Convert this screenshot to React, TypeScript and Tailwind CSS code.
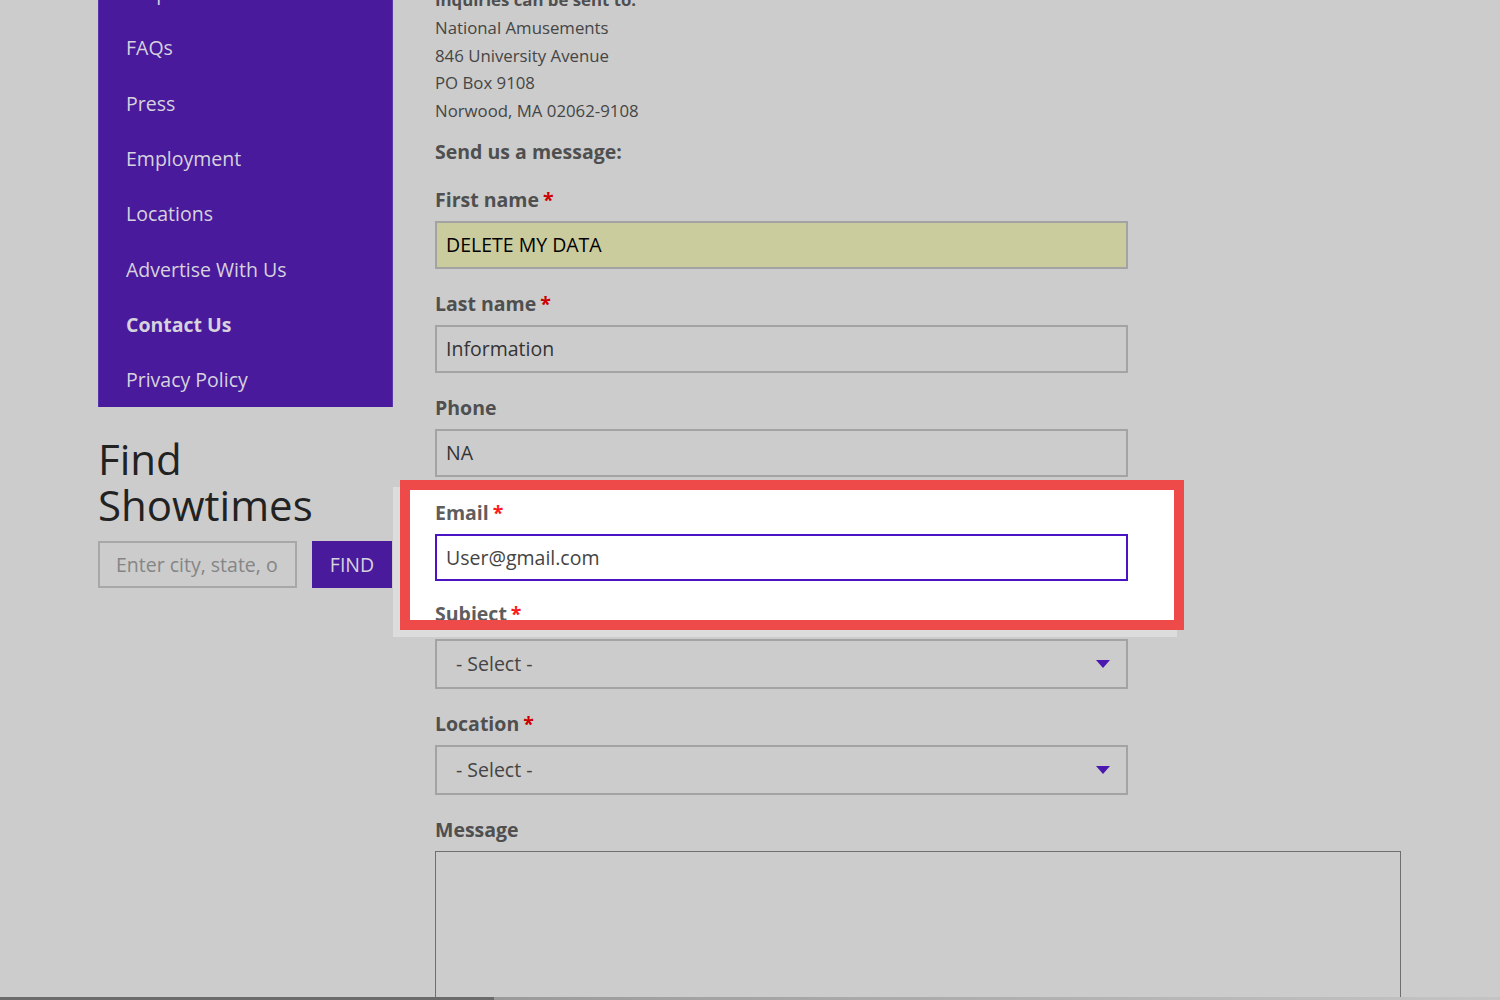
import { useState } from "react";

const navItems = [
  { label: "Help with Gift Cards", active: false },
  { label: "FAQs", active: false },
  { label: "Press", active: false },
  { label: "Employment", active: false },
  { label: "Locations", active: false },
  { label: "Advertise With Us", active: false },
  { label: "Contact Us", active: true },
  { label: "Privacy Policy", active: false },
];

const address = ["National Amusements", "846 University Avenue", "PO Box 9108", "Norwood, MA 02062-9108"];

function Label({ text, required, light }: { text: string; required?: boolean; light?: boolean }) {
  return (
    <div className={`text-[19.5px] leading-[30px] font-bold ${light ? "text-[#5e5e5e]" : "text-[#4f4f4f]"}`}>
      {text}
      {required && <span className={`ml-1 ${light ? "text-[#ff1a1a]" : "text-[#cc0000]"}`}>*</span>}
    </div>
  );
}

function TextField({ value, autofill }: { value: string; autofill?: boolean }) {
  return (
    <input
      readOnly
      value={value}
      className={`mt-[6px] w-[693px] h-[48px] border-2 border-[#a3a3a3] px-[9px] text-[19.5px] outline-none ${
        autofill ? "bg-[#cbcc9e] text-black" : "bg-transparent text-[#333]"
      }`}
    />
  );
}

function SelectField() {
  return (
    <div className="mt-[6px] w-[693px] h-[50px] border-2 border-[#a3a3a3] flex items-center justify-between pl-[19px] pr-[16px]">
      <span className="text-[19.5px] text-[#444]">- Select -</span>
      <svg width="14" height="8" viewBox="0 0 14 8">
        <path d="M0 0h14L7 8z" fill="#4a18b0" />
      </svg>
    </div>
  );
}

export default function App() {
  const [city, setCity] = useState("");

  return (
    <div className="relative h-[1000px] overflow-hidden bg-[#cccccc] font-['Open_Sans',sans-serif]">
      <div className="flex gap-[42px] pl-[98px]">
        {/* Sidebar */}
        <aside className="w-[295px] shrink-0">
          <nav className="bg-[#4a1a9c] border-x border-[#5b33ad] -mt-[35px]">
            {navItems.map((item) => (
              <a
                key={item.label}
                href="#"
                className={`flex items-center h-[55.3px] pl-[27px] whitespace-nowrap text-[19.5px] text-[#d6d3de] ${
                  item.active ? "font-bold" : ""
                }`}
              >
                {item.label}
              </a>
            ))}
          </nav>
          <h2 className="mt-[29px] text-[42px] leading-[46px] text-[#222]">
            Find
            <br />
            Showtimes
          </h2>
          <div className="mt-[13px] flex gap-[15px]">
            <input
              value={city}
              onChange={(e) => setCity(e.target.value)}
              placeholder="Enter city, state, or zip"
              className="w-[199px] h-[47px] border-2 border-[#a8a8a8] px-[16px] text-[19.5px] bg-transparent placeholder:text-[#858585] outline-none"
            />
            <button className="w-[80px] h-[47px] bg-[#4a1a9c] text-[#d6d3de] text-[19.5px]">FIND</button>
          </div>
        </aside>

        {/* Contact form */}
        <main className="-mt-[14px] pb-10">
          <p className="text-[16.8px] leading-[28px] font-bold text-[#4f4f4f]">Inquiries can be sent to:</p>
          {address.map((line) => (
            <p key={line} className="text-[16.8px] leading-[27.7px] text-[#454545]">
              {line}
            </p>
          ))}
          <p className="mt-[12px] text-[19.5px] leading-[30px] font-bold text-[#4f4f4f]">Send us a message:</p>

          <div className="mt-[18px]">
            <Label text="First name" required />
            <TextField value="DELETE MY DATA" autofill />
          </div>
          <div className="mt-[20px]">
            <Label text="Last name" required />
            <TextField value="Information" />
          </div>
          <div className="mt-[20px]">
            <Label text="Phone" />
            <TextField value="NA" />
          </div>

          {/* Highlighted field */}
          <div className="mt-[3px] -ml-[35px] w-[784px] h-[150px] border-[10px] border-[#ef4a4a] bg-white overflow-hidden pl-[25px] pt-[8px] shadow-[-7px_7px_0_#dcdcdc]">
            <Label text="Email" required light />
            <input
              readOnly
              value="User@gmail.com"
              className="mt-[6px] w-[693px] h-[47px] border-2 border-[#4a14c4] px-[9px] text-[19.5px] text-[#444] outline-none bg-white"
            />
            <div className="mt-[18px]">
              <Label text="Subject" required light />
            </div>
          </div>

          <div className="mt-[9px]">
            <SelectField />
          </div>
          <div className="mt-[20px]">
            <Label text="Location" required />
            <SelectField />
          </div>
          <div className="mt-[20px]">
            <Label text="Message" />
            <textarea className="mt-[6px] block w-[966px] h-[200px] border border-[#6f6f6f] bg-transparent outline-none" />
          </div>
        </main>
      </div>

      {/* window edge */}
      <div className="absolute bottom-0 left-0 w-[494px] h-[3px] bg-[#6a6a6a]" />
      <div className="absolute bottom-0 left-[494px] right-0 h-[3px] bg-gradient-to-r from-[#9a9a9a] to-[#c4c4c4]" />
    </div>
  );
}
